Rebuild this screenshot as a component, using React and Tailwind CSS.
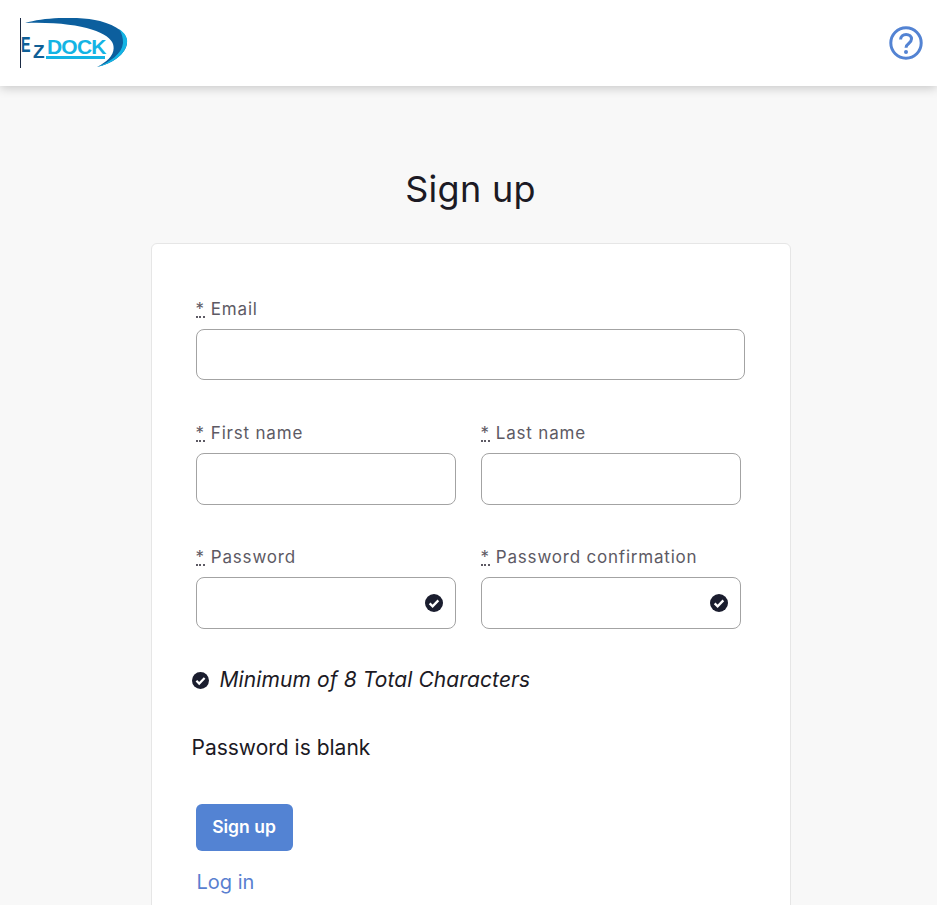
const font = { fontFamily: 'Inter, "Noto Sans", sans-serif' };

function CheckDot({ className }) {
    return (
        <svg viewBox="0 0 17 17" className={className}>
            <circle cx="8.5" cy="8.5" r="8.5" fill="#1a1d2e" />
            <path d="M4.4 8.8l2.8 2.8 5.4-5.6" fill="none" stroke="#fff" strokeWidth="2.2" />
        </svg>
    );
}

function Logo() {
    return (
        <div className="relative h-[50px] w-[108px] border-l border-[#1a2a44]" style={{ fontFamily: '"Liberation Sans", sans-serif' }}>
            <svg viewBox="0 0 108 50" className="absolute left-[-1px] top-0 h-[50px] w-[108px]">
                <path d="M5 5C25 -1 60 -2 80 3C98 8 108 16 107 25C106 36 92 46 77 49C88 43 96 36 93 26C90 15 60 3 5 5Z" fill="#0c5f9e" />
                <path d="M99 11C105 15 108 20 107 25C106 36 92 46 77 49C90 44 102 36 103 25C103 20 102 15 99 11Z" fill="#14b4e4" />
                <rect x="26" y="38" width="59" height="3" fill="#14b4e4" />
            </svg>
            <span className="absolute left-[0px] top-[16px] origin-left scale-x-[0.65] text-[22px] font-bold leading-none text-[#0f5f96]">E</span>
            <span className="absolute left-[12px] top-[24px] text-[19px] font-bold leading-none text-[#0f5f96]">Z</span>
            <span className="absolute left-[26px] top-[18px] text-[21px] font-bold leading-none tracking-[-0.8px] text-[#14b4e4]">DOCK</span>
        </div>
    );
}

function HelpIcon() {
    return (
        <svg viewBox="0 0 34 34" className="h-[34px] w-[34px]" fill="none" stroke="#5383d3">
            <circle cx="17" cy="17" r="15.2" strokeWidth="3" />
            <path d="M11.6 13.6c0-3.2 2.4-5.2 5.5-5.2s5.4 1.9 5.4 4.7c0 4.4-5.5 4.3-5.5 8.6" strokeWidth="3" />
            <circle cx="17" cy="26" r="2" fill="#5383d3" stroke="none" />
        </svg>
    );
}

function Field({ label, check, className, inputClass = 'h-[52px]' }) {
    return (
        <div className={className}>
            <label className="mb-[7px] flex h-[25px] items-center text-[17px] tracking-[0.8px] text-[#5d5a64]">
                <abbr className="mr-[6px] border-b-2 border-dotted border-[#5d5a64] pb-0 leading-[14px] no-underline">*</abbr>
                {label}
            </label>
            <div className={`relative rounded-lg border border-[#a3a3a3] bg-white ${inputClass}`}>
                {check && <CheckDot className="absolute right-[12px] top-[16px] h-[18px] w-[18px]" />}
            </div>
        </div>
    );
}

export default function App() {
    return (
        <div className="flex h-screen flex-col overflow-hidden bg-[#f8f8f8]" style={font}>
            <header className="flex h-[86px] shrink-0 items-center justify-between bg-white pl-[20px] pr-[14px] shadow-[0_2px_10px_rgba(0,0,0,0.2)]">
                <Logo />
                <HelpIcon />
            </header>
            <main className="flex flex-col items-center pl-[4px]">
                <h1 className="mt-[81px] h-[44px] text-[36px] leading-[44px] tracking-[0.3px] text-[#1c1a24]">Sign up</h1>
                <div className="mt-[32px] w-[640px] rounded-md border border-[#e6e6e6] bg-white pb-10 pl-[40px] pr-[45px] pt-[53px]">
                    <Field label="Email" inputClass="h-[51px]" className="ml-[4px] w-[549px]" />
                    <div className="ml-[4px] mt-[41px] flex gap-[25px]">
                        <Field label="First name" className="w-[260px]" />
                        <Field label="Last name" className="w-[260px]" />
                    </div>
                    <div className="ml-[4px] mt-[40px] flex gap-[25px]">
                        <Field label="Password" check className="w-[260px]" />
                        <Field label="Password confirmation" check className="w-[260px]" />
                    </div>
                    <div className="mt-[37px] flex h-[28px] items-center gap-[11px]">
                        <CheckDot className="h-[17px] w-[17px]" />
                        <span className="text-[21px] italic tracking-[0.1px] text-[#1c1a24]">Minimum of 8 Total Characters</span>
                    </div>
                    <p className="mt-[39px] h-[28px] text-[21px] leading-[30px] text-[#1c1a24]">Password is blank</p>
                    <button className="ml-[4px] mt-[43px] block h-[47px] w-[97px] rounded-md bg-[#5383d3] text-[17.5px] font-semibold text-white">Sign up</button>
                    <a className="ml-[5px] mt-[16px] block text-[20px] text-[#5a7fd0]">Log in</a>
                </div>
            </main>
        </div>
    );
}
